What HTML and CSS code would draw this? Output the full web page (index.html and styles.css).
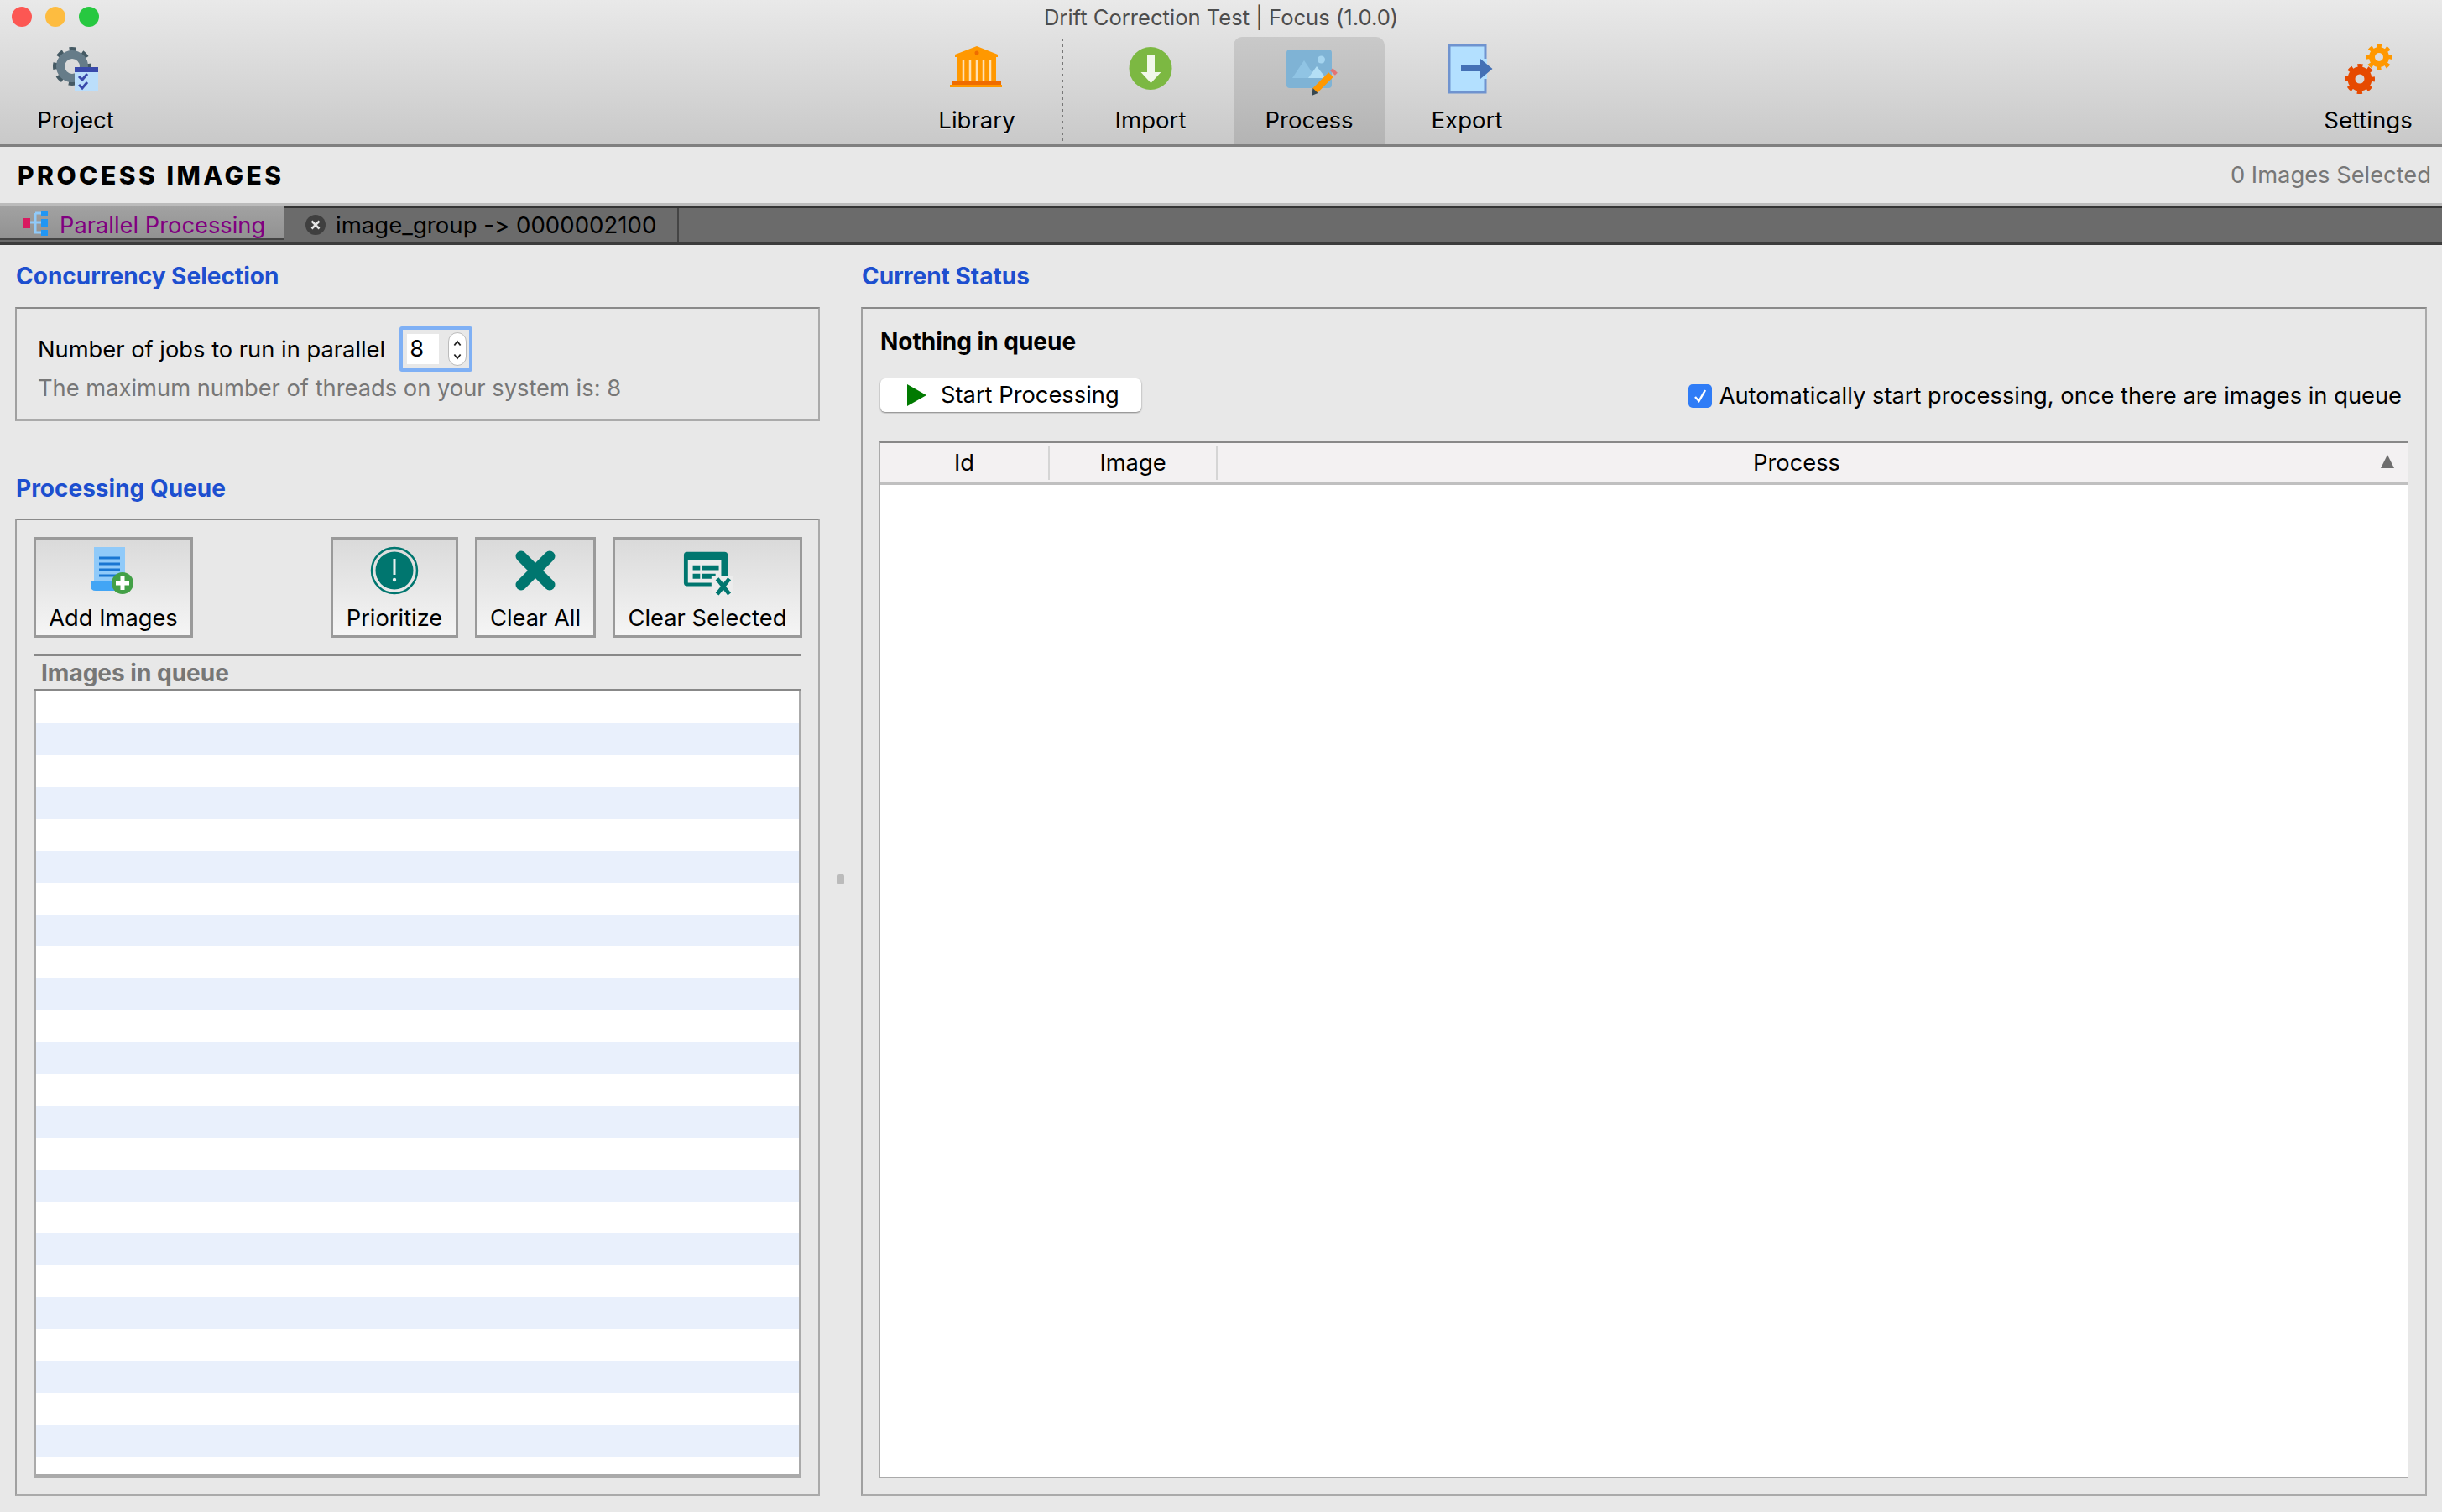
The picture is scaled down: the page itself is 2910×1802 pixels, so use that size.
FILE: index.html
```html
<!DOCTYPE html>
<html lang="en">

<head>
    <meta charset="UTF-8">
    <title>Drift Correction Test | Focus (1.0.0)</title>
    <link rel="stylesheet" href="styles.css">
</head>

<body>
    <header class="toolbar">
        <div class="titlebar">
            <div class="lights">
                <span class="light red"></span>
                <span class="light yellow"></span>
                <span class="light green"></span>
            </div>
            <div class="win-title">Drift Correction Test | Focus (1.0.0)</div>
        </div>
        <nav class="tools">
            <a class="tool tool-project">
                <svg class="tool-icon" viewBox="0 0 80 66">
                    <circle cx="36" cy="27" r="19.5" fill="none" stroke="#455a64" stroke-width="7" stroke-dasharray="7.7 7.6" stroke-dashoffset="3.8" />
                    <circle cx="36" cy="27" r="14" fill="none" stroke="#667c89" stroke-width="10" />
                    <rect x="39" y="28" width="28" height="29" fill="#bbdefb" />
                    <rect x="39" y="28" width="28" height="6" fill="#3949ab" />
                    <path d="M44 39l4 4 6-7M44 49l4 4 6-7" fill="none" stroke="#3949ab" stroke-width="3" />
                </svg>
                <span>Project</span>
            </a>
            <a class="tool tool-library">
                <svg class="tool-icon" viewBox="0 0 80 66">
                    <path d="M40 3L65 13V16H14V13Z" fill="#ff9800" />
                    <circle cx="40" cy="11" r="2.5" fill="#ef6c00" />
                    <rect x="17" y="16" width="46" height="30" fill="#ff9800" />
                    <path d="M24 20V46M32 20V46M40 20V46M48 20V46M56 20V46" stroke="#ffe0b2" stroke-width="2.5" />
                    <rect x="11" y="45" width="58" height="4" fill="#ef6c00" />
                    <rect x="8" y="49" width="62" height="3" fill="#ff9800" />
                </svg>
                <span>Library</span>
            </a>
            <a class="tool tool-import">
                <svg class="tool-icon" viewBox="0 0 80 66">
                    <circle cx="40" cy="29.5" r="25.5" fill="#7cb842" />
                    <path d="M36 14H45V34H52.500L40.500 47 28.500 34H36Z" fill="#f1f8e9" />
                </svg>
                <span>Import</span>
            </a>
            <a class="tool tool-process">
                <svg class="tool-icon" viewBox="0 0 80 66">
                    <rect x="13" y="7" width="54" height="46" rx="4" fill="#7fb3d5" />
                    <circle cx="54.500" cy="19" r="4.500" fill="#a5d4ef" />
                    <path d="M20 41L34 20 48 41Z" fill="#90c4e4" />
                    <path d="M39 41L49 27 60 41Z" fill="#b3dff5" />
                    <path d="M47 56L66 37" stroke="#ff9800" stroke-width="8" />
                    <path d="M68 35L71 32" stroke="#e57373" stroke-width="8" />
                    <path d="M43 62L44.500 53 50.500 59Z" fill="#37474f" />
                </svg>
                <span>Process</span>
            </a>
            <a class="tool tool-export">
                <svg class="tool-icon" viewBox="0 0 80 66">
                    <rect x="19" y="2" width="43" height="56" fill="#b3e0ff" stroke="#6f93cf" stroke-width="3" />
                    <rect x="60" y="18" width="4" height="24" fill="#b3e0ff" />
                    <path d="M33 26H56V18L70.500 30 56 42V33H33Z" fill="#4470b5" />
                </svg>
                <span>Export</span>
            </a>
            <div class="spacer"></div>
            <a class="tool tool-settings">
                <svg class="tool-icon" viewBox="0 0 80 66">
                    <g fill="none" stroke="#ff9800">
                        <circle cx="53" cy="16" r="13.500" stroke-width="5" stroke-dasharray="5.300 5.300" stroke-dashoffset="2.650" />
                        <circle cx="53" cy="16" r="8.500" stroke-width="7" />
                    </g>
                    <g fill="none" stroke="#e64a00">
                        <circle cx="30" cy="42" r="15.500" stroke-width="5" stroke-dasharray="6.100 6.070" stroke-dashoffset="3.050" />
                        <circle cx="30" cy="42" r="10" stroke-width="9" />
                    </g>
                </svg>
                <span>Settings</span>
            </a>
        </nav>
    </header>

    <div class="page-head">
        <h1>PROCESS IMAGES</h1>
        <span class="selected-count">0 Images Selected</span>
    </div>

    <div class="tabbar">
        <div class="tab active">
            <svg class="tab-icon" viewBox="0 0 30 30">
                <path d="M8 14H26M15 3V26H26M15 3H26" fill="none" stroke="#90caf9" stroke-width="3" />
                <rect x="0" y="9" width="9" height="12" fill="#d81b60" />
                <rect x="22" y="0" width="8" height="7" fill="#2196f3" />
                <rect x="22" y="10" width="8" height="10" fill="#2196f3" />
                <rect x="22" y="23" width="8" height="7" fill="#2196f3" />
            </svg>
            <span>Parallel Processing</span>
        </div>
        <div class="tab">
            <svg class="tab-close" viewBox="0 0 24 24">
                <circle cx="12" cy="12" r="12" fill="#3f3f3f" />
                <path d="M7.500 7.500L16.500 16.500M16.500 7.500L7.500 16.500" stroke="#e6e6e6" stroke-width="2.500" />
            </svg>
            <span>image_group -&gt; 0000002100</span>
        </div>
    </div>

    <main class="content">
        <section class="left-col">
            <h2 class="section-title">Concurrency Selection</h2>
            <div class="box jobs-box">
                <div class="jobs-row">
                    <span class="jobs-label">Number of jobs to run in parallel</span>
                    <div class="spin">
                        <span class="spin-value">8</span>
                        <span class="stepper">
                            <svg viewBox="0 0 22 40" width="22" height="40">
                                <path d="M7 14L11 9 15 14M7 26L11 31 15 26" fill="none" stroke="#222" stroke-width="2" />
                            </svg>
                        </span>
                    </div>
                </div>
                <p class="hint">The maximum number of threads on your system is: 8</p>
            </div>

            <h2 class="section-title queue-title">Processing Queue</h2>
            <div class="box queue-box">
                <div class="btn-row">
                    <a class="icon-btn add-btn">
                        <svg viewBox="0 0 60 60" width="60" height="60">
                            <rect x="7" y="2" width="37" height="44" fill="#90caf9" />
                            <path d="M3 43H32V54H9Q3 54 3 48Z" fill="#42a5f5" />
                            <path d="M13 15H38M13 22H38M13 29H38M13 36H34" stroke="#1976d2" stroke-width="3" />
                            <circle cx="41" cy="45" r="13" fill="#43a047" />
                            <path d="M41 37V53M33 45H49" stroke="#fff" stroke-width="5" />
                        </svg>
                        <span>Add Images</span>
                    </a>
                    <a class="icon-btn prioritize-btn">
                        <svg viewBox="0 0 60 60" width="60" height="60">
                            <circle cx="30" cy="30" r="27" fill="none" stroke="#00766f" stroke-width="2.500" />
                            <circle cx="30" cy="30" r="22.500" fill="#00766f" />
                            <rect x="28.500" y="16" width="3" height="19" fill="#e9f0ef" />
                            <circle cx="30" cy="41" r="2.200" fill="#e9f0ef" />
                        </svg>
                        <span>Prioritize</span>
                    </a>
                    <a class="icon-btn clear-btn">
                        <svg viewBox="0 0 60 60" width="60" height="60">
                            <path d="M13 13L47 47M47 13L13 47" stroke="#00766f" stroke-width="13" stroke-linecap="round" />
                        </svg>
                        <span>Clear All</span>
                    </a>
                    <a class="icon-btn clear-sel-btn">
                        <svg viewBox="0 0 62 62" width="62" height="62">
                            <rect x="2" y="8" width="54" height="42" rx="4" fill="#00766f" />
                            <rect x="7" y="18" width="41" height="28" fill="#ececec" />
                            <path d="M13 27.500H22M24 27.500H45M13 38H22M24 38H41" stroke="#00766f" stroke-width="6" />
                            <rect x="36" y="38" width="26" height="24" fill="#ececec" />
                            <path d="M43 41L58 60M58 41L43 60" stroke="#00766f" stroke-width="5" />
                        </svg>
                        <span>Clear Selected</span>
                    </a>
                </div>
                <div class="list-head">Images in queue</div>
                <div class="list"></div>
            </div>
        </section>

        <div class="splitter">
            <span class="grip"></span>
        </div>

        <section class="right-col">
            <h2 class="section-title">Current Status</h2>
            <div class="box status-box">
                <div class="status-label">Nothing in queue</div>
                <div class="status-row">
                    <a class="start-btn">
                        <svg viewBox="0 0 23 26" width="23" height="26">
                            <path d="M0 0L23 13 0 26Z" fill="#007a00" />
                        </svg>
                        <span>Start Processing</span>
                    </a>
                    <label class="auto-start">
                        <svg viewBox="0 0 28 28" width="28" height="28">
                            <rect width="28" height="28" rx="5" fill="#2f7cf6" />
                            <path d="M8 15L12.500 20 20 7" fill="none" stroke="#fff" stroke-width="2.500" />
                        </svg>
                        <span>Automatically start processing, once there are images in queue</span>
                    </label>
                </div>
                <div class="table">
                    <div class="table-head">
                        <span class="col col-id">Id</span>
                        <span class="col col-image">Image</span>
                        <span class="col col-process">Process</span>
                        <span class="sort-arrow"></span>
                    </div>
                </div>
            </div>
        </section>
    </main>
</body>

</html>
```

FILE: styles.css
```css
* {
    box-sizing: border-box;
}

html,
body {
    margin: 0;
    height: 100%;
    overflow: hidden;
}

body {
    display: flex;
    flex-direction: column;
    background: #e8e8e8;
    color: #000;
    font-family: Inter, "Liberation Sans", sans-serif;
    font-size: 27.3px;
    font-variant-ligatures: none;
    font-feature-settings: "calt" 0;
    line-height: 32px;
}

/* top toolbar */
.toolbar {
    height: 175px;
    background: linear-gradient(#e9e9e9, #c9c9c9);
    border-bottom: 3px solid #808080;
}

.titlebar {
    height: 44px;
    position: relative;
    display: flex;
    justify-content: center;
    align-items: center;
    padding-bottom: 3px;
}

.lights {
    position: absolute;
    left: 14px;
    top: 8px;
    display: flex;
    gap: 16px;
}

.light {
    width: 24px;
    height: 24px;
    border-radius: 50%;
}

.red {
    background: #fc5753;
}

.yellow {
    background: #fdbc40;
}

.green {
    background: #27c840;
}

.win-title {
    color: #4d4d4d;
    font-size: 25.6px;
}

.tools {
    display: flex;
    height: 128px;
    font-size: 27.6px;
}

.tool {
    display: flex;
    flex-direction: column;
    align-items: center;
    padding-top: 8px;
    text-shadow: 0 1px 0 rgba(255, 255, 255, 0.5);
}

.tool-icon {
    width: 80px;
    height: 66px;
    margin-bottom: 9px;
    flex: none;
}

.tool-project {
    width: 180px;
    margin-right: 881px;
}

.tool-library {
    width: 206px;
    height: 122px;
    margin-top: 2px;
    padding-top: 6px;
    background: linear-gradient(#777 50%, transparent 0) right top / 2px 7px repeat-y;
}

.tool-import {
    width: 203px;
    padding-left: 5px;
}

.tool-process {
    width: 180px;
    border-radius: 10px 10px 0 0;
    background: linear-gradient(#c9c9c9, #b4b4b4);
}

.tool-export {
    width: 196px;
}

.spacer {
    flex: 1;
}

.tool-settings {
    width: 140px;
    margin-right: 18px;
}

/* page heading */
.page-head {
    height: 70px;
    display: flex;
    justify-content: space-between;
    align-items: center;
    padding: 1px 13px 0 21px;
    border-bottom: 3px solid #bbb;
}

.page-head h1 {
    margin: 0;
    font-size: 30px;
    font-weight: 800;
    letter-spacing: 3.5px;
}

.selected-count {
    color: #777;
}

/* tabs */
.tabbar {
    height: 47px;
    display: flex;
    background: #6b6b6b;
    border-top: 3px solid #333;
    border-bottom: 4px solid #3c3c3c;
}

.tab {
    width: 470px;
    height: 40px;
    display: flex;
    align-items: center;
    gap: 12px;
    padding-left: 25px;
    border-right: 2px solid #444;
    font-size: 27.6px;
}

.tab.active {
    width: 339px;
    height: 41px;
    gap: 14px;
    margin-top: -3px;
    padding: 8px 0 0 27px;
    background: linear-gradient(#a2a2a2, #929292);
    border-right: 0;
    border-bottom: 2px solid #444;
    color: #800080;
    font-size: 27.3px;
}

.tab-icon {
    width: 30px;
    height: 30px;
    margin-top: -6px;
}

.tab-close {
    width: 24px;
    height: 24px;
}

/* main panels */
.content {
    flex: 1;
    display: flex;
    min-height: 0;
    padding: 21px 18px 19px;
}

.left-col {
    width: 959px;
    display: flex;
    flex-direction: column;
}

.right-col {
    flex: 1;
    display: flex;
    flex-direction: column;
}

.splitter {
    width: 49px;
    display: flex;
    justify-content: center;
    align-items: center;
}

.grip {
    width: 8px;
    height: 12px;
    background: #bbb;
    border-radius: 2px;
}

.section-title {
    margin: 0 0 21px 1px;
    color: #1d4fcf;
    font-size: 28px;
    font-weight: 700;
}

.queue-title {
    margin-top: 64px;
    margin-bottom: 20px;
}

.box {
    border-top: 2px solid #8a8a8a;
    border-left: 2px solid #a0a0a0;
    border-right: 2px solid #aaa;
    border-bottom: 3px solid #aaa;
}

.jobs-box {
    height: 136px;
    padding: 21px 25px 0;
}

.jobs-row {
    display: flex;
    align-items: center;
    gap: 17px;
}

.jobs-label {
    padding-top: 2px;
}

.spin {
    width: 87px;
    height: 54px;
    display: flex;
    align-items: center;
    gap: 11px;
    padding-left: 5px;
    border: 4px solid #7fb0f5;
    border-radius: 3px;
}

.spin-value {
    width: 38px;
    height: 36px;
    padding-left: 3px;
    background: #fff;
    line-height: 36px;
}

.stepper {
    width: 22px;
    height: 40px;
    background: #fff;
    border: 1px solid #bbb;
    border-radius: 11px;
    display: flex;
}

.hint {
    margin: 4px 0 0;
    color: #777;
}

.queue-box {
    flex: 1;
    display: flex;
    flex-direction: column;
    padding: 20px 19px 19px 20px;
}

.btn-row {
    display: flex;
    gap: 20px;
}

.icon-btn {
    height: 120px;
    padding-top: 7px;
    display: flex;
    flex-direction: column;
    align-items: center;
    border: 3px solid #9a9a9a;
    background: linear-gradient(#dadada, #f5f5f5);
}

.icon-btn svg {
    height: 60px;
    margin-bottom: 11px;
    flex: none;
    overflow: visible;
}

.add-btn {
    width: 190px;
    margin-right: auto;
}

.prioritize-btn {
    width: 152px;
}

.clear-btn {
    width: 144px;
}

.clear-sel-btn {
    width: 226px;
}

.list-head {
    height: 43px;
    margin: 20px 1px 0 0;
    padding-left: 8px;
    color: #777;
    font-size: 28px;
    font-weight: 700;
    line-height: 40px;
    border-top: 2px solid #888;
    border-left: 1px solid #aaa;
    border-right: 1px solid #aaa;
    border-bottom: 2px solid #888;
}

.list {
    flex: 1;
    margin-right: 1px;
    border-left: 3px solid #aaa;
    border-right: 3px solid #aaa;
    border-bottom: 4px solid #aaa;
    background: repeating-linear-gradient(#fff 0, #fff 38px, #e9f0fc 38px, #e9f0fc 76px);
    background-position: 0 1px;
}

.status-box {
    flex: 1;
    display: flex;
    flex-direction: column;
    padding: 23px 20px 18px 20px;
}

.status-label {
    margin-left: 1px;
    font-size: 28px;
    font-weight: 700;
}

.status-row {
    display: flex;
    justify-content: space-between;
    align-items: center;
    height: 40px;
    margin-top: 28px;
}

.start-btn {
    width: 311px;
    height: 40px;
    display: flex;
    align-items: center;
    gap: 17px;
    padding-left: 32px;
    margin-left: 1px;
    background: #fff;
    border-radius: 6px;
    box-shadow: 0 1px 2px rgba(0, 0, 0, 0.45);
}

.auto-start {
    display: flex;
    align-items: center;
    gap: 9px;
    margin-right: 8px;
    padding-top: 1px;
}

.table {
    flex: 1;
    margin-top: 35px;
    background: #fff;
    border-top: 2px solid #888;
    border-left: 1px solid #aaa;
    border-right: 1px solid #aaa;
    border-bottom: 2px solid #aaa;
}

.table-head {
    position: relative;
    height: 50px;
    display: flex;
    align-items: center;
    background: #f3f1f2;
    border-bottom: 3px solid #c0c0c0;
}

.col {
    height: 40px;
    text-align: center;
    line-height: 40px;
    border-right: 2px solid #d5d5d5;
}

.col-id {
    width: 202px;
}

.col-image {
    width: 200px;
}

.col-process {
    flex: 1;
    border-right: 0;
    padding-right: 38px;
}

.sort-arrow {
    position: absolute;
    right: 16px;
    top: 14px;
    border-left: 8px solid transparent;
    border-right: 8px solid transparent;
    border-bottom: 16px solid #6e6e6e;
}
```
